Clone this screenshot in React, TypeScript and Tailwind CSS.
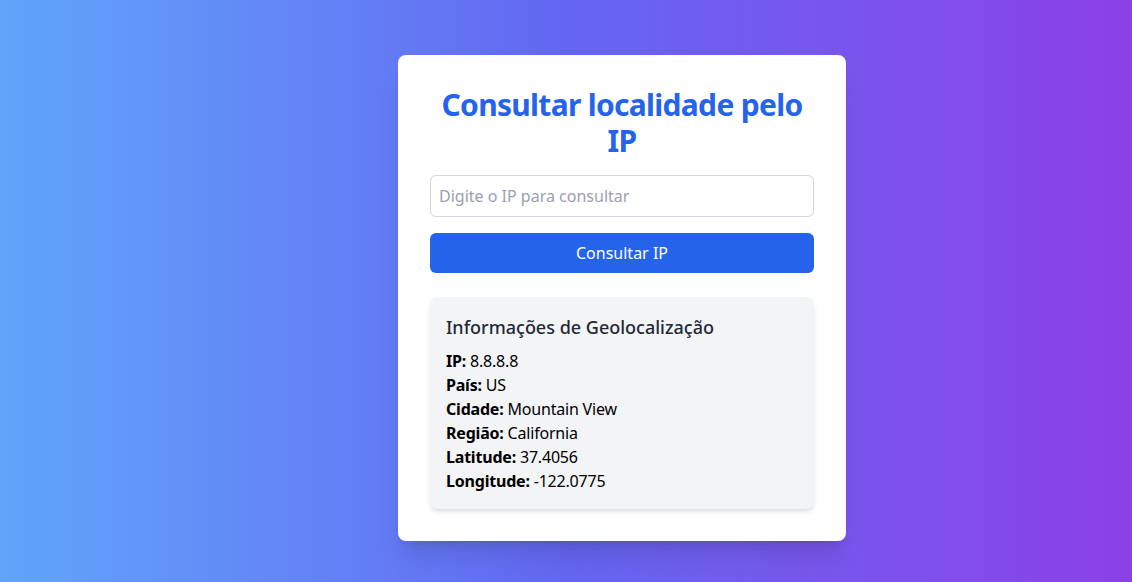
const rows = [
  { label: "IP:", value: "8.8.8.8" },
  { label: "País:", value: "US" },
  { label: "Cidade:", value: "Mountain View" },
  { label: "Região:", value: "California" },
  { label: "Latitude:", value: "37.4056" },
  { label: "Longitude:", value: "-122.0775" },
];

export default function App() {
  return (
    <div className="min-h-screen bg-gradient-to-r from-[#60a5fa] via-[#6366f1] to-[#8b3fe8] font-['Noto_Sans',sans-serif]">
      <div className="flex justify-center pl-28 pt-[55px]">
        <div className="w-[448px] rounded-lg bg-white p-8 shadow-xl">
          <h1 className="mb-4 text-center text-3xl font-bold tracking-[-0.7px] text-[#2563eb]">
            Consultar localidade pelo IP
          </h1>
          <input
            type="text"
            placeholder="Digite o IP para consultar"
            className="mb-4 w-full rounded-md border border-gray-300 p-2 text-base text-black placeholder:text-gray-400 focus:outline-none"
          />
          <button className="w-full rounded-md bg-[#2563eb] py-2 text-base text-white">
            Consultar IP
          </button>

          <div className="mt-6 rounded-lg bg-[#f3f4f6] p-4 shadow-md">
            <h2 className="mb-2 text-lg font-medium text-[#1f2937]">
              Informações de Geolocalização
            </h2>
            {rows.map((r) => (
              <p key={r.label} className="text-base tracking-[-0.2px] text-black">
                <strong className="font-bold">{r.label}</strong> {r.value}
              </p>
            ))}
          </div>
        </div>
      </div>
    </div>
  );
}
